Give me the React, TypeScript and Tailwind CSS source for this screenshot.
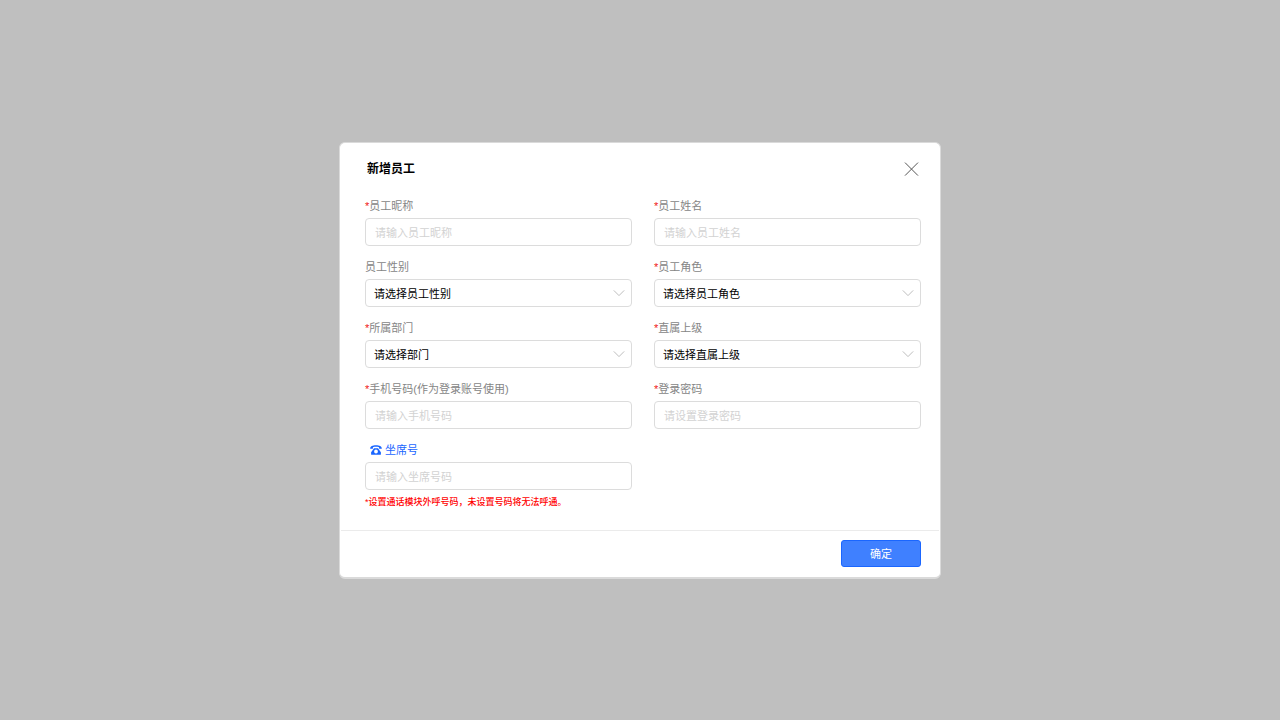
import { ReactNode } from "react";

type FieldProps = {
  id: string;
  label: string;
  required?: boolean;
  children: ReactNode;
};

const Field = ({ id, label, required, children }: FieldProps) => {
  return (
    <div className="flex flex-col gap-1">
      <label htmlFor={id} className="text-[11px] leading-4 text-[#858585]">
        {required && <span className="text-[#f01414]">*</span>}
        {label}
      </label>
      {children}
    </div>
  );
};

type TextInputProps = {
  id: string;
  placeholder: string;
  type?: string;
};

const TextInput = ({ id, placeholder, type = "text" }: TextInputProps) => {
  return (
    <input
      id={id}
      name={id}
      type={type}
      placeholder={placeholder}
      className="h-7 w-full rounded border border-[#dcdcdc] bg-white px-[9px] pt-[2px] text-[11px] text-black outline-none placeholder:text-[#d2d2d2] focus:border-[#3f80ff]"
    />
  );
};

type SelectInputProps = {
  id: string;
  placeholder: string;
};

const SelectInput = ({ id, placeholder }: SelectInputProps) => {
  return (
    <div className="relative">
      <select
        id={id}
        name={id}
        className="block h-7 w-full appearance-none rounded border border-[#dcdcdc] bg-white pt-[3px] pr-7 pl-2 text-[11px] text-black outline-none focus:border-[#3f80ff]"
      >
        <option value="">{placeholder}</option>
      </select>
      <svg
        viewBox="0 0 12 8"
        className="pointer-events-none absolute top-[10px] right-[7px] h-2 w-3"
        fill="none"
        stroke="#bdbdbd"
      >
        <path d="M0.8 1.4 L6 6.6 L11.2 1.4" />
      </svg>
    </div>
  );
};

const PhoneIcon = () => {
  return (
    <svg viewBox="0 0 12 10" className="h-[10px] w-3" fill="#1a66ff">
      <path d="M0.2 3.4 C0.2 1.1 2.6 0.2 6 0.2 C9.4 0.2 11.8 1.1 11.8 3.4 L11.8 3.8 L9.2 3.8 L9 2.3 C7.2 1.7 4.8 1.7 3 2.3 L2.8 3.8 L0.2 3.8 Z" />
      <path
        fillRule="evenodd"
        d="M4 3.2 L8 3.2 L10.9 7.2 L10.9 9.2 Q10.9 9.8 10.3 9.8 L1.7 9.8 Q1.1 9.8 1.1 9.2 L1.1 7.2 Z M6 4.6 A1.9 1.9 0 1 0 6 8.4 A1.9 1.9 0 1 0 6 4.6 Z"
      />
    </svg>
  );
};

export default function App() {
  return (
    <div className="flex min-h-screen items-center justify-center bg-[#bfbfbf] font-['Liberation_Sans','Noto_Sans_CJK_SC',sans-serif]">
      <form
        role="dialog"
        aria-labelledby="dialogTitle"
        onSubmit={(event) => event.preventDefault()}
        className="w-full max-w-[602px] rounded-md border border-b-2 border-[#dadada] bg-white"
      >
        <div className="flex items-center justify-between pt-4 pr-[21px] pl-[27px]">
          <h1 id="dialogTitle" className="text-[12px] leading-5 font-bold text-black">
            新增员工
          </h1>
          <button type="button" aria-label="关闭" className="cursor-pointer">
            <svg viewBox="0 0 16 16" className="size-4" fill="none" stroke="#555">
              <path d="M2 1.6 L15 14.6 M15 1.6 L2 14.6" />
            </svg>
          </button>
        </div>

        <div className="grid grid-cols-2 gap-x-[22px] gap-y-[13px] pt-[19px] pr-[19px] pb-5 pl-[25px]">
          <Field id="nickname" label="员工昵称" required>
            <TextInput id="nickname" placeholder="请输入员工昵称" />
          </Field>
          <Field id="fullName" label="员工姓名" required>
            <TextInput id="fullName" placeholder="请输入员工姓名" />
          </Field>
          <Field id="gender" label="员工性别">
            <SelectInput id="gender" placeholder="请选择员工性别" />
          </Field>
          <Field id="role" label="员工角色" required>
            <SelectInput id="role" placeholder="请选择员工角色" />
          </Field>
          <Field id="department" label="所属部门" required>
            <SelectInput id="department" placeholder="请选择部门" />
          </Field>
          <Field id="manager" label="直属上级" required>
            <SelectInput id="manager" placeholder="请选择直属上级" />
          </Field>
          <Field id="mobile" label="手机号码(作为登录账号使用)" required>
            <TextInput id="mobile" placeholder="请输入手机号码" />
          </Field>
          <Field id="password" label="登录密码" required>
            <TextInput id="password" type="password" placeholder="请设置登录密码" />
          </Field>
          <div className="flex flex-col gap-1">
            <label
              htmlFor="seat"
              className="flex items-center gap-[3px] pl-[5px] text-[11px] leading-4 text-[#1a66ff]"
            >
              <PhoneIcon />
              坐席号
            </label>
            <TextInput id="seat" placeholder="请输入坐席号码" />
            <p className="text-[9px] leading-4 font-medium text-[#ff0000]">
              *设置通话模块外呼号码，未设置号码将无法呼通。
            </p>
          </div>
        </div>

        <div className="mx-px flex justify-end border-t border-[#ebebeb] pt-[9px] pr-[18px] pb-[10px]">
          <button
            type="submit"
            className="h-[27px] w-20 cursor-pointer rounded-[3px] border border-[#1a66ff] bg-[#3f80ff] pt-[2px] text-[11px] text-white"
          >
            确定
          </button>
        </div>
      </form>
    </div>
  );
}
